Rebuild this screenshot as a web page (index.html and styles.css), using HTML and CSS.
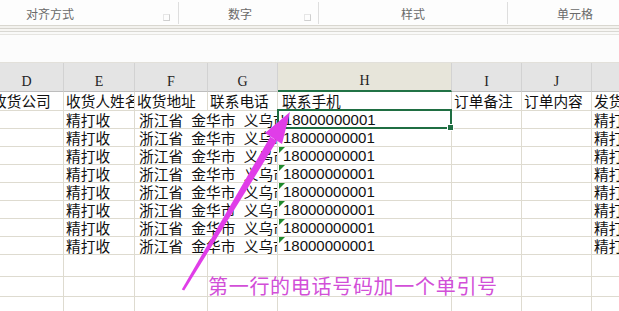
FILE: index.html
```html
<!DOCTYPE html>
<html lang="zh-CN">
<head>
    <meta charset="UTF-8">
    <meta name="viewport" content="width=device-width, initial-scale=1.0">
    <title>联系手机</title>
    <link rel="stylesheet" href="styles.css">
</head>
<body>
    <div class="ribbon">
        <div class="group g1"><span>对齐方式</span><i class="launcher"></i></div>
        <div class="group g2"><span>数字</span><i class="launcher"></i></div>
        <div class="group g3"><span>样式</span></div>
        <div class="group g4"><span>单元格</span></div>
    </div>
    <div class="ribbon-edge"></div>
    <div class="formula-area"></div>

    <div class="sheet">
        <div class="col-head">D</div>
        <div class="col-head">E</div>
        <div class="col-head">F</div>
        <div class="col-head">G</div>
        <div class="col-head active">H</div>
        <div class="col-head">I</div>
        <div class="col-head">J</div>
        <div class="col-head"></div>

        <div class="cell">收货公司</div>
        <div class="cell">收货人姓名</div>
        <div class="cell">收货地址</div>
        <div class="cell">联系电话</div>
        <div class="cell phone-head">联系手机</div>
        <div class="cell">订单备注</div>
        <div class="cell">订单内容</div>
        <div class="cell">发货人</div>

        <div class="cell"></div>
        <div class="cell">精打收</div>
        <div class="cell wide">浙江省 金华市 义乌市</div>
        <div class="cell num selected">'18000000001</div>
        <div class="cell"></div>
        <div class="cell"></div>
        <div class="cell">精打收</div>
    </div>

    <svg class="arrow" width="619" height="311" viewBox="0 0 619 311">
        <polygon points="184.2,290.6 181.8,289.4 270.2,136.8 277,140.8" fill="#e03de8"/>
        <polygon points="290,112 265,133 282,144" fill="#e03de8"/>
    </svg>
    <div class="note">第一行的电话号码加一个单引号</div>

    <script>
        const sheet = document.querySelector('.sheet');

        // 其余7行数据，手机号左上角带绿色三角
        for (let i = 0; i < 7; i++) {
            const row = ['', '精打收', '浙江省 金华市 义乌市', '18000000001', '', '', '精打收'];
            row.forEach((text, j) => {
                const cell = document.createElement('div');
                cell.className = 'cell';
                if (j === 2) cell.classList.add('wide');
                if (j === 3) cell.classList.add('num', 'flag');
                cell.textContent = text;
                sheet.appendChild(cell);
            });
        }

        // 下方空行
        for (let i = 0; i < 24; i++) {
            const cell = document.createElement('div');
            cell.className = 'cell';
            sheet.appendChild(cell);
        }
    </script>
</body>
</html>
```

FILE: styles.css
```css
body {
    margin: 0;
    padding: 0;
    width: 619px;
    height: 311px;
    overflow: hidden;
    background-color: #ffffff;
    font-family: "Noto Sans CJK SC", sans-serif;
    position: relative;
}

.ribbon {
    display: flex;
    height: 25px;
    background-color: #fdfdfd;
}

.group {
    display: flex;
    align-items: center;
    justify-content: space-between;
    box-sizing: border-box;
    height: 22px;
    margin-top: 2px;
    border-right: 1px solid #dedede;
    font-size: 12px;
    color: #6a6a6a;
}

.g1 {
    width: 179px;
    padding-left: 26px;
    padding-right: 8px;
}

.g2 {
    width: 140px;
    padding-left: 49px;
    padding-right: 7px;
}

.g3 {
    width: 189px;
    padding-left: 82px;
}

.g4 {
    width: 111px;
    padding-left: 49px;
    border-right: none;
}

.launcher {
    width: 5px;
    height: 5px;
    margin-top: 8px;
    border: 1px solid #cfcfcf;
    border-top-color: #e6e6e6;
    border-left-color: #e6e6e6;
}

.ribbon-edge {
    height: 10px;
    background: linear-gradient(to bottom,
        #d9d7d0 0, #d9d7d0 1px,
        #f3f2ee 1px, #f3f2ee 3px,
        #d6d4ce 3px, #d6d4ce 4px,
        #f7f6f3 4px, #f7f6f3 6px,
        #d9d8d3 6px, #d9d8d3 7px,
        #f9f9f8 7px, #f9f9f8 9px,
        #e6e5e1 9px, #e6e5e1 10px);
}

.formula-area {
    height: 27px;
    background-color: #fcfcfc;
    border-bottom: 1px solid #e2e0da;
}

.sheet {
    display: grid;
    margin-left: -10px;
    grid-template-columns: 74px 71px 73px 70px 174px 70px 70px 90px;
    grid-template-rows: 29px 19px repeat(8, 18px) 22px 20px 20px 20px;
}

.col-head {
    display: flex;
    align-items: flex-end;
    justify-content: center;
    box-sizing: border-box;
    padding-bottom: 1px;
    background-color: #e4e4e4;
    border-right: 1px solid #d2d2d2;
    border-bottom: 1px solid #bdbdbd;
    font-family: "Liberation Serif", serif;
    font-size: 14px;
    color: #222222;
}

.col-head.active {
    background-color: #e7e5da;
    border-bottom: 2px solid #217346;
}

.cell {
    box-sizing: border-box;
    padding-left: 2px;
    border-right: 1px solid #dedbd0;
    border-bottom: 1px solid #dedbd0;
    font-size: 14.7px;
    line-height: 17px;
    color: #111111;
    white-space: nowrap;
    overflow: hidden;
}

.wide {
    grid-column: span 2;
    padding-left: 4px;
    word-spacing: 5px;
}

.phone-head {
    padding-left: 4px;
}

.num {
    position: relative;
    overflow: visible;
    padding-left: 5px;
    font-family: "Liberation Sans", sans-serif;
    font-size: 15px;
}

.flag::before {
    content: "";
    position: absolute;
    top: 0;
    left: 1px;
    border-top: 6px solid #1f8a2c;
    border-right: 6px solid transparent;
}

.selected {
    padding-left: 3px;
}

.selected::after {
    content: "";
    position: absolute;
    top: -2px;
    left: -1px;
    right: -1px;
    bottom: -1px;
    border: 2px solid #1f6e42;
}

.selected::before {
    content: "";
    position: absolute;
    right: -3px;
    bottom: -3px;
    width: 5px;
    height: 5px;
    background-color: #1f6e42;
    border: 1px solid #ffffff;
    z-index: 1;
}

.arrow {
    position: absolute;
    top: 0;
    left: 0;
    pointer-events: none;
}

.note {
    position: absolute;
    left: 208px;
    top: 271px;
    font-size: 20px;
    letter-spacing: 0.7px;
    color: #d24fd8;
    white-space: nowrap;
}
```
